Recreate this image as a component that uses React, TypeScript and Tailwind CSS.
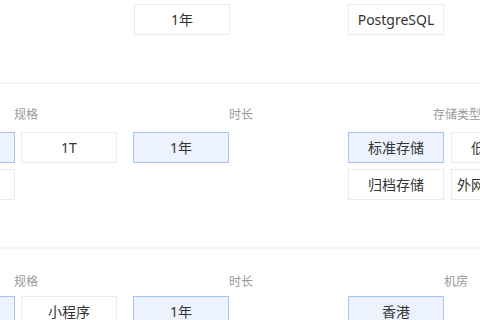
import type { ReactNode } from 'react'

// ============================================================================
// OPTION BUTTON
// ============================================================================

interface OptProps {
  children?: ReactNode
  active?: boolean
  className?: string
}

function Opt({ children, active, className = '' }: OptProps) {
  return (
    <div
      className={`
        flex h-[31px] w-[96px] shrink-0 items-center justify-center
        whitespace-nowrap border text-[14px] text-[#333]
        ${active ? 'border-[#a9c1f3] bg-[#ecf2fe]' : 'border-[#ebebeb] bg-white'}
        ${className}
      `}
    >
      {children}
    </div>
  )
}

function Divider() {
  return <div className="h-[2px] w-full bg-[#f2f4f8]" />
}

// ============================================================================
// APP
// ============================================================================

export default function App() {
  return (
    <div
      className="h-[320px] w-[480px] overflow-hidden bg-white"
      style={{ fontFamily: '"Noto Sans", "Noto Sans CJK SC", sans-serif' }}
    >
      {/* Top section (database) */}
      <div className="h-[82px] pt-[4px]">
        <div className="flex">
          <Opt className="ml-[134px]">1年</Opt>
          <Opt className="ml-[118px]">PostgreSQL</Opt>
        </div>
      </div>

      <Divider />

      {/* Storage section */}
      <div className="h-[163px] pt-[22px]">
        <div className="flex h-[17px] items-center whitespace-nowrap text-[12px] leading-none text-[#999]">
          <span className="ml-[14px] w-[215px] shrink-0">规格</span>
          <span className="w-[204px] shrink-0">时长</span>
          <span className="shrink-0">存储类型</span>
        </div>

        <div className="ml-[-81px] mt-[9px] flex">
          <Opt active />
          <Opt className="ml-[6px]">1T</Opt>
          <Opt active className="ml-[16px]">1年</Opt>
          <Opt active className="ml-[119px]">标准存储</Opt>
          <Opt className="ml-[7px]">低频存储</Opt>
        </div>

        <div className="ml-[-81px] mt-[6px] flex">
          <Opt />
          <Opt className="ml-[333px]">归档存储</Opt>
          <Opt className="ml-[7px]">外网下行流量</Opt>
        </div>
      </div>

      <Divider />

      {/* Mini program section */}
      <div className="pt-[24px]">
        <div className="flex h-[17px] items-center whitespace-nowrap text-[12px] leading-none text-[#999]">
          <span className="ml-[14px] w-[215px] shrink-0">规格</span>
          <span className="w-[215px] shrink-0">时长</span>
          <span className="shrink-0">机房</span>
        </div>

        <div className="ml-[-81px] mt-[6px] flex">
          <Opt active />
          <Opt className="ml-[6px]">小程序</Opt>
          <Opt active className="ml-[16px]">1年</Opt>
          <Opt active className="ml-[119px]">香港</Opt>
        </div>
      </div>
    </div>
  )
}
